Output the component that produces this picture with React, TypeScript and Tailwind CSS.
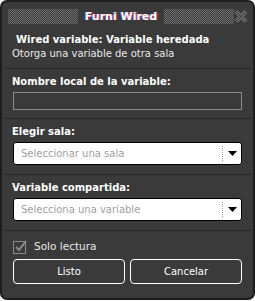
import React from "react";

const font = { fontFamily: '"DejaVu Sans", "Liberation Sans", sans-serif' };

function Caret() {
  return (
    <svg width="9" height="5" viewBox="0 0 9 5" className="block">
      <path d="M0 0H9L4.5 5Z" fill="#000" />
    </svg>
  );
}

function Select({ label }: { label: string }) {
  return (
    <div className="mx-[11px] h-[23px] flex items-center bg-white border border-black rounded-[3px]">
      <span className="flex-1 pl-[7px] text-[10px] text-[#a0a0a0] leading-none">{label}</span>
      <div className="h-[15px] border-l border-dotted border-[#9a9a9a]" />
      <div className="w-[18px] flex justify-center">
        <Caret />
      </div>
    </div>
  );
}

function Divider() {
  return <div className="h-px bg-[#262626] mx-[2px]" />;
}

export default function App() {
  const dots =
    "flex-1 h-[15px] bg-[conic-gradient(#6e6e6e_25%,transparent_0_50%,#6e6e6e_0_75%,transparent_0)] bg-[length:2px_2px]";
  return (
    <div style={font} className="w-[255px] h-[301px] bg-white">
      <div className="w-[255px] h-[300px] rounded-[7px] border-2 border-[#1e1e1e] bg-[#3a3a3a] flex flex-col text-white overflow-hidden">
        <div className="h-[26px] flex items-center pl-[6px] pr-[5px] pt-[3px] gap-[7px]">
          <div className={dots} />
          <span
            className="text-[11px] font-bold leading-none"
            style={{ textShadow: "1px 0 0 #d03a3a, -1px 0 0 #3a5ad0" }}
          >
            Furni Wired
          </span>
          <div className={dots} />
          <svg width="14" height="15" viewBox="0 0 14 15" className="-ml-[7px]">
            <path d="M2 2.5L12 12.5M12 2.5L2 12.5" stroke="#7a7a7a" strokeWidth="3.5" />
            <path d="M2 2.5L12 12.5M12 2.5L2 12.5" stroke="#454545" strokeWidth="1.3" />
          </svg>
        </div>
        <div className="px-[10px] pt-[5px] pb-[7px]">
          <div className="pl-[4px] text-[10px] font-bold leading-[14px]">
            Wired variable: Variable heredada
          </div>
          <div className="text-[10px] leading-[14px] text-[#e8e8e8]">Otorga una variable de otra sala</div>
        </div>
        <Divider />
        <div className="pt-[6px] pb-[8px]">
          <div className="px-[10px] text-[10px] font-bold leading-[14px] mb-[3px]">Nombre local de la variable:</div>
          <div className="mx-[11px] h-[18px] border border-[#8a8a8a] bg-[#3a3a3a]" />
        </div>
        <Divider />
        <div className="pt-[6px] pb-[9px]">
          <div className="px-[10px] text-[10px] font-bold leading-[14px] mb-[3px]">Elegir sala:</div>
          <Select label="Seleccionar una sala" />
        </div>
        <Divider />
        <div className="pt-[6px] pb-[9px]">
          <div className="px-[10px] text-[10px] font-bold leading-[14px] mb-[3px]">Variable compartida:</div>
          <Select label="Selecciona una variable" />
        </div>
        <Divider />
        <div className="flex items-center gap-[6px] pl-[11px] pt-[8px] h-[23px]">
          <svg width="15" height="15" viewBox="0 0 15 15">
            <rect x="0.5" y="2.5" width="12" height="12" fill="none" stroke="#8a8a8a" />
            <path d="M3 8L6 11L13 2" fill="none" stroke="#8a8a8a" strokeWidth="2" />
          </svg>
          <span className="text-[10.5px] text-[#e8e8e8] leading-none">Solo lectura</span>
        </div>
        <div className="flex gap-[5px] px-[11px] pt-[5px]">
          <button className="flex-1 h-[25px] border border-white rounded-[4px] text-[10px] text-white">Listo</button>
          <button className="flex-1 h-[25px] border border-white rounded-[4px] text-[10px] text-white">Cancelar</button>
        </div>
      </div>
    </div>
  );
}
